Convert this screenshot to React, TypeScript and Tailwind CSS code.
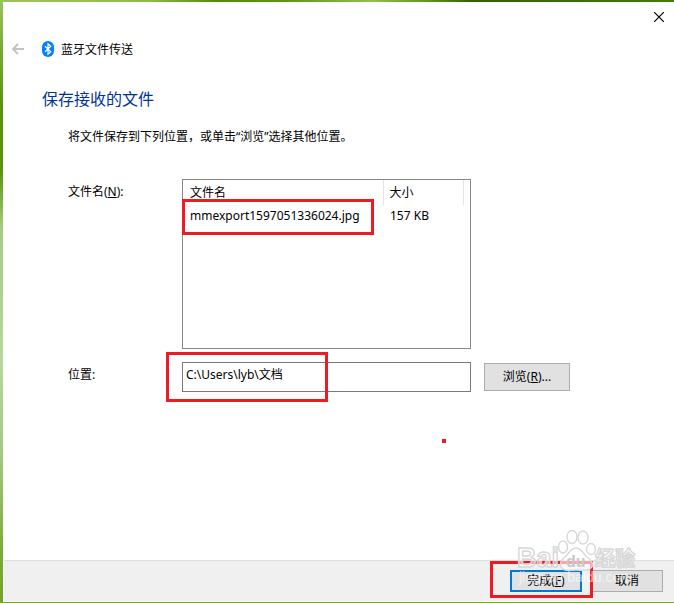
import { useState } from "react";

const files = [{ name: "mmexport1597051336024.jpg", size: "157 KB" }];

const BluetoothIcon = () => (
  <svg width="12" height="16" viewBox="0 0 12 16" aria-hidden="true">
    <rect width="12" height="16" rx="6" fill="#0082fc" />
    <path
      d="M3 5.2 8.8 10.8 6 13.2V2.8l2.8 2.4L3 10.8"
      fill="none"
      stroke="#fff"
      strokeWidth="1.2"
    />
  </svg>
);

const BackIcon = () => (
  <svg width="12" height="12" viewBox="0 0 12 12" aria-hidden="true">
    <path
      d="M12 6H1M6 1 1 6l5 5"
      fill="none"
      stroke="#c3c3c3"
      strokeWidth="1.8"
    />
  </svg>
);

const CloseIcon = () => (
  <svg width="10" height="10" viewBox="0 0 10 10" aria-hidden="true">
    <path d="M0 0 10 10M10 0 0 10" stroke="#000" strokeWidth="1.2" />
  </svg>
);

// Site watermark in the bottom right corner
const Watermark = () => (
  <svg
    width="120"
    height="60"
    viewBox="0 0 120 60"
    aria-hidden="true"
    className="pointer-events-none absolute right-[37px] bottom-[14px]"
  >
    <g
      fill="#fff"
      fillOpacity="0.6"
      stroke="#d8d8d8"
      strokeWidth="1.4"
      fontFamily="'Liberation Sans', 'Noto Sans CJK SC', sans-serif"
      fontWeight="700"
    >
      <ellipse cx="46" cy="19" rx="4.5" ry="6" />
      <ellipse cx="55" cy="9" rx="5" ry="6.5" />
      <ellipse cx="66" cy="9.5" rx="5" ry="6.5" />
      <ellipse cx="74" cy="21" rx="4.5" ry="5.5" />
      <path d="M59 20c-5 0-7 5-10 8-5 4-7 7-5 11 3 5 10 3 15 3s13 2 16-3c2-4-1-7-6-11-3-3-5-8-10-8z" />
      <text x="0" y="39" fontSize="27">
        Bai
      </text>
      <text x="78" y="38" fontSize="20">
        经验
      </text>
    </g>
    <text
      x="49"
      y="39"
      fontSize="16"
      fontWeight="700"
      fill="#c8c8c8"
      fontFamily="'Liberation Sans', sans-serif"
    >
      du
    </text>
    <text
      x="2"
      y="54"
      fontSize="14"
      fill="#fff"
      fillOpacity="0.6"
      fontFamily="'Liberation Sans', sans-serif"
    >
      jingyan.baidu.com
    </text>
  </svg>
);

const App = () => {
  const [location, setLocation] = useState("C:\\Users\\lyb\\文档");

  return (
    <div className="flex min-h-screen flex-col bg-[linear-gradient(to_bottom,#9cc45c_0%,#7aab35_8%,#5a920a_18%,#5a920a_28%,#a8cc84_38%,#b8d69c_60%,#a5c983_75%,#7aab35_92%,#6fa524_100%)] pb-px font-['Noto_Sans','Noto_Sans_CJK_SC',sans-serif] text-[12px] leading-4 text-black">
      <div className="h-[2px] bg-[linear-gradient(to_right,#9cc45c_0%,#8fbb4b_22%,#4f8f06_32%,#5a9612_42%,#93bf52_55%,#5f9a1e_63%,#2f6406_70%,#3f7d0a_100%)]"></div>
      <div className="relative ml-[3px] flex flex-1 flex-col bg-white">
        <header className="flex items-start justify-between pl-[9px]">
          <div className="flex items-center pt-[38px]">
            <button type="button" aria-label="返回" disabled className="mr-[18px]">
              <BackIcon />
            </button>
            <BluetoothIcon />
            <p className="ml-[7px] pt-0.5">蓝牙文件传送</p>
          </div>
          <button type="button" aria-label="关闭" className="mt-2.5 mr-2.5">
            <CloseIcon />
          </button>
        </header>

        <main className="flex-1 pr-2 pl-[39px]">
          <h1 className="mt-[29px] text-[16px] leading-6 text-[#003399]">
            保存接收的文件
          </h1>
          <div className="pl-[26px]">
            <p className="mt-[18px]">
              将文件保存到下列位置，或单击“浏览”选择其他位置。
            </p>

            <div className="mt-[34px] flex">
              <p id="files-label" className="w-[114px] shrink-0 pt-[5px]">
                文件名(<u>N</u>):
              </p>
              <div className="h-[170px] w-[289px] border border-[#828790]">
                <table
                  aria-labelledby="files-label"
                  className="w-full table-fixed text-left"
                >
                  <thead>
                    <tr className="h-[25px]">
                      <th className="w-[200px] border-r border-[#e5e5e5] pl-[7px] font-normal">
                        文件名
                      </th>
                      <th className="w-[80px] border-r border-[#e5e5e5] pl-1.5 font-normal">
                        大小
                      </th>
                      <th></th>
                    </tr>
                  </thead>
                  <tbody>
                    {files.map((file) => (
                      <tr key={file.name} className="h-[22px]">
                        <td className="relative pl-[7px]">
                          {file.name}
                          <span className="absolute -top-1.5 -left-px h-9 w-48 border-3 border-[#ed1c24]"></span>
                        </td>
                        <td className="pl-[7px]">{file.size}</td>
                        <td></td>
                      </tr>
                    ))}
                  </tbody>
                </table>
              </div>
            </div>

            <div className="mt-[13px] flex items-start">
              <label htmlFor="location" className="w-[114px] shrink-0 pt-[5px]">
                位置:
              </label>
              <div className="relative w-[289px]">
                <input
                  id="location"
                  type="text"
                  value={location}
                  onChange={(e) => setLocation(e.target.value)}
                  className="h-[30px] w-full border border-[#7a7a7a] px-[3px] pb-1.5 focus:outline-none"
                />
                <span className="pointer-events-none absolute -top-2.5 -left-4 h-[50px] w-[162px] border-3 border-[#ed1c24]"></span>
                <span className="absolute top-[77px] right-[25px] size-1 bg-[#ed1c24]"></span>
              </div>
              <button
                type="button"
                className="mt-px ml-[13px] h-7 w-[86px] border border-[#adadad] bg-[#e1e1e1]"
              >
                浏览(<u>R</u>)...
              </button>
            </div>
          </div>
        </main>

        <footer className="mb-px ml-px flex justify-end gap-[9px] border-t border-[#dfdfdf] bg-[#f0f0f0] pt-[9px] pr-[11px] pb-[9px]">
          <div className="relative">
            <button
              type="button"
              className="h-[22px] w-[72px] border-2 border-[#0078d7] bg-[#e1e1e1] leading-4"
            >
              完成(<u>F</u>)
            </button>
            <span className="pointer-events-none absolute -top-[9px] -left-5 h-[37px] w-[103px] border-3 border-[#ed1c24]"></span>
          </div>
          <button
            type="button"
            className="h-[22px] w-[72px] border border-[#adadad] bg-[#e1e1e1]"
          >
            取消
          </button>
        </footer>
        <Watermark />
      </div>
    </div>
  );
};

export default App;
